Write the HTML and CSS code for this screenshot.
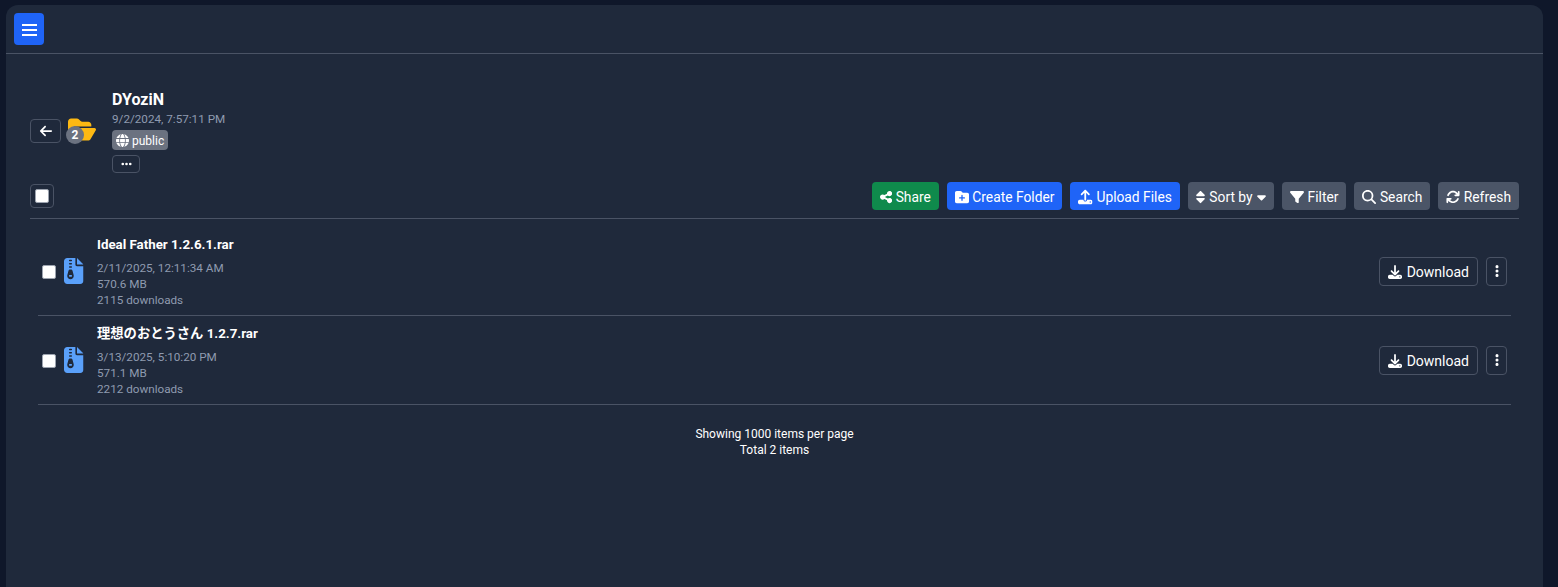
FILE: index.html
```html
<!DOCTYPE html>
<html lang="en">
<head>
  <meta charset="UTF-8">
  <meta name="viewport" content="width=device-width, initial-scale=1.0">
  <title>DYoziN</title>
  <link rel="stylesheet" href="styles.css">
</head>
<body>
  <svg class="defs" aria-hidden="true">
    <symbol id="i-bars" viewBox="0 0 15 12"><path d="M0 0h15v2H0zM0 5h15v2H0zM0 10h15v2H0z"/></symbol>
    <symbol id="i-arrow" viewBox="0 0 448 512"><path d="M9.400 233.400c-12.500 12.500-12.500 32.800 0 45.300l160 160c12.500 12.500 32.800 12.500 45.300 0s12.500-32.800 0-45.300L109.300 288 416 288c17.700 0 32-14.300 32-32s-14.300-32-32-32l-306.700 0L214.600 118.600c12.500-12.500 12.500-32.800 0-45.300s-32.800-12.500-45.300 0l-160 160z"/></symbol>
    <symbol id="i-folder-open" viewBox="0 0 576 512"><path d="M88.700 223.800L0 375.800V96C0 60.700 28.700 32 64 32H181.500c17 0 33.300 6.700 45.300 18.700l26.500 26.500c12 12 28.300 18.700 45.300 18.700H416c35.300 0 64 28.700 64 64v32H144c-22.800 0-43.800 12.100-55.300 31.800zm27.600 16.100C122.100 230 132.600 224 144 224H544c11.500 0 22 6.100 27.700 16.100s5.700 22.200-.1 32.100l-112 192C453.900 474 443.400 480 432 480H32c-11.500 0-22-6.100-27.700-16.100s-5.700-22.200 .1-32.100l112-192z"/></symbol>
    <symbol id="i-globe" viewBox="0 0 512 512"><path d="M352 256c0 22.200-1.200 43.600-3.300 64H163.300c-2.200-20.400-3.300-41.800-3.300-64s1.200-43.600 3.300-64H348.700c2.200 20.400 3.300 41.800 3.300 64zm28.800-64H503.900c5.300 20.500 8.100 41.900 8.100 64s-2.800 43.500-8.100 64H380.800c2.100-20.600 3.200-42 3.200-64s-1.100-43.400-3.200-64zm112.600-32H376.700c-10-63.900-29.800-117.400-55.300-151.600c78.300 20.700 142 77.500 171.900 151.600zm-149.100 0H167.700c6.100-36.400 15.500-68.600 27-94.700c10.500-23.600 22.200-40.700 33.500-51.500C239.400 3.200 248.700 0 256 0s16.600 3.200 27.800 13.800c11.300 10.800 23 27.900 33.500 51.500c11.600 26 20.900 58.200 27 94.700zm-209 0H18.600C48.600 85.900 112.200 29.100 190.600 8.400C165.100 42.600 145.300 96.100 135.300 160zM8.100 192H131.200c-2.100 20.600-3.200 42-3.200 64s1.100 43.400 3.200 64H8.100C2.800 299.500 0 278.100 0 256s2.800-43.500 8.100-64zM194.700 446.600c-11.600-26-20.900-58.200-27-94.600H344.300c-6.100 36.400-15.500 68.600-27 94.600c-10.500 23.600-22.200 40.700-33.500 51.500C272.600 508.800 263.300 512 256 512s-16.600-3.200-27.800-13.800c-11.300-10.800-23-27.900-33.500-51.500zM135.300 352c10 63.900 29.800 117.400 55.300 151.600C112.200 482.900 48.600 426.100 18.600 352H135.300zm358.100 0c-30 74.100-93.600 130.900-171.900 151.600c25.500-34.200 45.200-87.700 55.300-151.600H493.400z"/></symbol>
    <symbol id="i-dots-h" viewBox="0 0 448 512"><path d="M8 256a56 56 0 1 1 112 0A56 56 0 1 1 8 256zm160 0a56 56 0 1 1 112 0 56 56 0 1 1-112 0zm216-56a56 56 0 1 1 0 112 56 56 0 1 1 0-112z"/></symbol>
    <symbol id="i-dots-v" viewBox="0 0 128 512"><path d="M64 360a56 56 0 1 0 0 112 56 56 0 1 0 0-112zm0-160a56 56 0 1 0 0 112 56 56 0 1 0 0-112zM120 96A56 56 0 1 0 8 96a56 56 0 1 0 112 0z"/></symbol>
    <symbol id="i-share" viewBox="0 0 448 512"><path d="M352 224c53 0 96-43 96-96s-43-96-96-96s-96 43-96 96c0 4 .2 8 .7 11.900l-94.100 47C145.400 170.200 121.900 160 96 160c-53 0-96 43-96 96s43 96 96 96c25.900 0 49.400-10.200 66.600-26.900l94.100 47c-.5 3.900-.7 7.800-.7 11.900c0 53 43 96 96 96s96-43 96-96s-43-96-96-96c-25.900 0-49.400 10.200-66.600 26.900l-94.100-47c.5-3.900 .7-7.800 .7-11.900s-.2-8-.7-11.900l94.100-47C302.600 213.800 326.100 224 352 224z"/></symbol>
    <symbol id="i-folder-plus" viewBox="0 0 512 512"><path d="M512 416c0 35.300-28.700 64-64 64H64c-35.300 0-64-28.700-64-64V96C0 60.700 28.700 32 64 32H192c20.100 0 39.100 9.500 51.200 25.600l19.200 25.600c6 8.100 15.500 12.800 25.600 12.800H448c35.300 0 64 28.700 64 64V416zM232 376c0 13.300 10.700 24 24 24s24-10.700 24-24V312h64c13.300 0 24-10.700 24-24s-10.700-24-24-24H280V200c0-13.300-10.700-24-24-24s-24 10.700-24 24v64H168c-13.300 0-24 10.700-24 24s10.700 24 24 24h64v64z"/></symbol>
    <symbol id="i-upload" viewBox="0 0 512 512"><path d="M288 109.300V352c0 17.700-14.300 32-32 32s-32-14.300-32-32V109.300l-73.400 73.400c-12.500 12.500-32.800 12.500-45.300 0s-12.500-32.800 0-45.300l128-128c12.500-12.500 32.800-12.500 45.300 0l128 128c12.500 12.500 12.500 32.800 0 45.300s-32.800 12.500-45.300 0L288 109.300zM64 352H192c0 35.300 28.700 64 64 64s64-28.700 64-64H448c35.300 0 64 28.700 64 64v32c0 35.300-28.700 64-64 64H64c-35.300 0-64-28.700-64-64V416c0-35.300 28.700-64 64-64zM432 456a24 24 0 1 0 0-48 24 24 0 1 0 0 48z"/></symbol>
    <symbol id="i-sort" viewBox="0 0 320 512"><path d="M137.400 41.400c12.500-12.500 32.800-12.500 45.300 0l128 128c9.200 9.200 11.900 22.900 6.900 34.900s-16.600 19.800-29.600 19.800H32c-12.900 0-24.600-7.800-29.600-19.800s-2.200-25.700 6.900-34.900l128-128zm0 429.300l-128-128c-9.200-9.200-11.900-22.900-6.900-34.900s16.600-19.800 29.600-19.800H288c12.900 0 24.600 7.800 29.600 19.800s2.200 25.700-6.900 34.900l-128 128c-12.500 12.500-32.800 12.500-45.300 0z"/></symbol>
    <symbol id="i-caret" viewBox="0 0 320 512"><path d="M137.400 374.600c12.500 12.500 32.800 12.500 45.300 0l128-128c9.200-9.200 11.900-22.900 6.900-34.900s-16.600-19.800-29.600-19.800L32 192c-12.900 0-24.600 7.800-29.600 19.800s-2.200 25.700 6.900 34.900l128 128z"/></symbol>
    <symbol id="i-filter" viewBox="0 0 512 512"><path d="M3.900 54.900C10.500 40.900 24.500 32 40 32H472c15.500 0 29.500 8.900 36.100 22.900s4.600 30.500-5.200 42.500L320 320.900V448c0 12.100-6.800 23.200-17.700 28.600s-23.800 4.300-33.500-3l-64-48c-8.100-6-12.800-15.500-12.800-25.600V320.900L9 97.300C-.7 85.400-2.800 68.800 3.900 54.900z"/></symbol>
    <symbol id="i-search" viewBox="0 0 512 512"><path d="M416 208c0 45.900-14.900 88.300-40 122.700L502.600 457.400c12.500 12.500 12.500 32.800 0 45.300s-32.800 12.500-45.300 0L330.700 376c-34.400 25.200-76.800 40-122.700 40C93.100 416 0 322.900 0 208S93.100 0 208 0S416 93.100 416 208zM208 352a144 144 0 1 0 0-288 144 144 0 1 0 0 288z"/></symbol>
    <symbol id="i-sync" viewBox="0 0 512 512"><path d="M105.100 202.600c7.700-21.800 20.200-42.300 37.800-59.800c62.500-62.500 163.800-62.500 226.300 0L386.300 160H336c-17.700 0-32 14.300-32 32s14.300 32 32 32H463.500c0 0 0 0 0 0h.4c17.700 0 32-14.300 32-32V64c0-17.700-14.300-32-32-32s-32 14.300-32 32v51.200L414.400 97.600c-87.500-87.500-229.300-87.500-316.800 0C73.200 122 55.600 150.700 44.800 181.400c-5.900 16.700 2.900 34.900 19.500 40.800s34.900-2.900 40.800-19.500zM39 289.300c-5 1.500-9.800 4.200-13.700 8.200c-4 4-6.700 8.800-8.100 14c-.3 1.200-.6 2.500-.8 3.800c-.3 1.700-.4 3.400-.4 5.100V448c0 17.700 14.300 32 32 32s32-14.300 32-32V396.900l17.600 17.500 0 0c87.500 87.400 229.300 87.400 316.700 0c24.400-24.400 42.100-53.100 52.900-83.700c5.900-16.700-2.900-34.900-19.500-40.800s-34.900 2.900-40.800 19.500c-7.700 21.800-20.200 42.300-37.800 59.800c-62.500 62.500-163.800 62.500-226.300 0l-.1-.1L125.600 352H176c17.700 0 32-14.300 32-32s-14.300-32-32-32H48.400c-1.600 0-3.200 .1-4.800 .3s-3.100 .5-4.600 1z"/></symbol>
    <symbol id="i-download" viewBox="0 0 512 512"><path d="M288 32c0-17.700-14.300-32-32-32s-32 14.300-32 32V274.700l-73.400-73.400c-12.500-12.500-32.800-12.500-45.300 0s-12.500 32.800 0 45.300l128 128c12.500 12.500 32.800 12.500 45.300 0l128-128c12.500-12.500 12.500-32.800 0-45.300s-32.800-12.500-45.300 0L288 274.700V32zM64 352c-35.300 0-64 28.700-64 64v32c0 35.300 28.700 64 64 64H448c35.300 0 64-28.700 64-64V416c0-35.300-28.700-64-64-64H346.500l-45.300 45.300c-25 25-65.500 25-90.500 0L165.500 352H64zm368 56a24 24 0 1 1 0 48 24 24 0 1 1 0-48z"/></symbol>
    <symbol id="i-archive" viewBox="0 0 384 512"><path d="M64 0C28.700 0 0 28.700 0 64V448c0 35.300 28.700 64 64 64H320c35.300 0 64-28.700 64-64V160H256c-17.700 0-32-14.300-32-32V0H64zM256 0V128H384L256 0zM96 48c0-8.800 7.200-16 16-16h32c8.800 0 16 7.200 16 16s-7.200 16-16 16H112c-8.800 0-16-7.200-16-16zm0 64c0-8.800 7.200-16 16-16h32c8.800 0 16 7.200 16 16s-7.200 16-16 16H112c-8.800 0-16-7.200-16-16zm0 64c0-8.800 7.200-16 16-16h32c8.800 0 16 7.200 16 16s-7.200 16-16 16H112c-8.800 0-16-7.200-16-16zm-6.300 71.800c3.700-14 16.400-23.800 30.900-23.800h14.800c14.500 0 27.200 9.700 30.900 23.800l23.500 88.200c1.400 5.400 2.100 10.900 2.100 16.400c0 35.200-28.800 63.700-64 63.700s-64-28.500-64-63.700c0-5.500 .7-11.100 2.100-16.400l23.500-88.200zM112 336c-8.800 0-16 7.200-16 16s7.200 16 16 16h32c8.800 0 16-7.200 16-16s-7.200-16-16-16H112z"/></symbol>
  </svg>

  <div class="panel">
    <header class="topbar">
      <button class="menu-btn"><svg class="ico-menu"><use href="#i-bars"/></svg></button>
    </header>

    <main class="content">
      <section class="folder-head">
        <button class="btn btn-outline back-btn"><svg class="ico"><use href="#i-arrow"/></svg></button>
        <div class="folder-icon">
          <svg class="ico-folder"><use href="#i-folder-open"/></svg>
          <span class="count-badge">2</span>
        </div>
        <div class="folder-info">
          <h1 class="folder-name">DYoziN</h1>
          <div class="meta">9/2/2024, 7:57:11 PM</div>
          <span class="tag"><svg class="ico-tag"><use href="#i-globe"/></svg>public</span>
          <button class="btn btn-outline more-btn"><svg class="ico-more"><use href="#i-dots-h"/></svg></button>
        </div>
      </section>

      <section class="toolbar">
        <label class="select-all"><input type="checkbox"></label>
        <div class="actions">
          <button class="btn btn-green"><svg class="ico-share"><use href="#i-share"/></svg>Share</button>
          <button class="btn btn-blue"><svg class="ico"><use href="#i-folder-plus"/></svg>Create Folder</button>
          <button class="btn btn-blue"><svg class="ico-upload"><use href="#i-upload"/></svg>Upload Files</button>
          <button class="btn btn-grey"><svg class="ico-sort"><use href="#i-sort"/></svg>Sort by<svg class="ico-caret"><use href="#i-caret"/></svg></button>
          <button class="btn btn-grey"><svg class="ico"><use href="#i-filter"/></svg>Filter</button>
          <button class="btn btn-grey"><svg class="ico"><use href="#i-search"/></svg>Search</button>
          <button class="btn btn-grey"><svg class="ico"><use href="#i-sync"/></svg>Refresh</button>
        </div>
      </section>

      <ul class="file-list">
        <li class="file-row">
          <input type="checkbox" class="file-check">
          <svg class="ico-file"><use href="#i-archive"/></svg>
          <div class="file-info">
            <div class="file-name">Ideal Father 1.2.6.1.rar</div>
            <div class="meta">2/11/2025, 12:11:34 AM</div>
            <div class="meta">570.6 MB</div>
            <div class="meta">2115 downloads</div>
          </div>
          <button class="btn btn-outline dl-btn"><svg class="ico"><use href="#i-download"/></svg>Download</button>
          <button class="btn btn-outline kebab-btn"><svg class="ico-kebab"><use href="#i-dots-v"/></svg></button>
        </li>
        <li class="file-row">
          <input type="checkbox" class="file-check">
          <svg class="ico-file"><use href="#i-archive"/></svg>
          <div class="file-info">
            <div class="file-name">理想のおとうさん 1.2.7.rar</div>
            <div class="meta">3/13/2025, 5:10:20 PM</div>
            <div class="meta">571.1 MB</div>
            <div class="meta">2212 downloads</div>
          </div>
          <button class="btn btn-outline dl-btn"><svg class="ico"><use href="#i-download"/></svg>Download</button>
          <button class="btn btn-outline kebab-btn"><svg class="ico-kebab"><use href="#i-dots-v"/></svg></button>
        </li>
      </ul>

      <footer class="list-footer">
        <div>Showing 1000 items per page</div>
        <div>Total 2 items</div>
      </footer>
    </main>
  </div>
</body>
</html>
```

FILE: styles.css
```css
:root {
  --page-bg: #0f172a;
  --panel-bg: #1f293b;
  --line: #4a5365;
  --muted: #8f9bb0;
  --blue: #1f64f7;
  --green: #0f8a4c;
  --grey: #4b5567;
}

* {
  box-sizing: border-box;
  margin: 0;
  padding: 0;
}

body {
  font-family: Roboto, "Noto Sans CJK JP", sans-serif;
  background-color: var(--page-bg);
  color: #fff;
  font-size: 14px;
  height: 100vh;
  overflow: hidden;
  padding: 5px 15px 0 6px;
}

.defs {
  display: none;
}

svg {
  fill: currentColor;
  flex-shrink: 0;
}

.panel {
  background-color: var(--panel-bg);
  border-radius: 12px 12px 0 0;
  height: 100%;
}

.topbar {
  height: 49px;
  padding: 8px;
  border-bottom: 1px solid var(--line);
}

.menu-btn {
  display: flex;
  align-items: center;
  justify-content: center;
  width: 30px;
  height: 32px;
  padding-top: 2px;
  border: none;
  border-radius: 4px;
  background-color: var(--blue);
  color: #fff;
}

.ico-menu {
  width: 15px;
  height: 12px;
}

.content {
  padding: 35px 24px 0;
}

.btn {
  display: inline-flex;
  align-items: center;
  justify-content: center;
  gap: 3.5px;
  height: 28px;
  padding: 1px 7px 0;
  border: 1px solid transparent;
  border-radius: 4px;
  color: #fff;
  font-family: inherit;
  font-size: 13.8px;
  white-space: nowrap;
}

.btn-outline {
  background: none;
  border-color: var(--line);
}

.btn-green {
  background-color: var(--green);
}

.btn-blue {
  background-color: var(--blue);
}

.btn-grey {
  background-color: var(--grey);
}

.ico {
  width: 14px;
  height: 14px;
}

.ico-share {
  width: 12.25px;
  height: 14px;
}

.ico-upload {
  width: 14.5px;
  height: 16px;
}

.folder-head {
  display: flex;
  align-items: center;
  height: 84px;
}

.back-btn {
  width: 31px;
  height: 24px;
  padding: 0;
}

.folder-icon {
  position: relative;
  width: 28px;
  height: 25px;
  margin: -4px 16px 0 7px;
}

.ico-folder {
  display: block;
  width: 28px;
  height: 25px;
  color: #fdb913;
}

.count-badge {
  position: absolute;
  left: -2px;
  top: 9px;
  width: 18px;
  height: 18px;
  border-radius: 50%;
  background-color: #6b7280;
  font-size: 12px;
  font-weight: 700;
  line-height: 18px;
  text-align: center;
}

.folder-info {
  display: flex;
  flex-direction: column;
  align-items: flex-start;
}

.folder-name {
  font-size: 16px;
  font-weight: 700;
  line-height: 19px;
  margin-bottom: 3px;
  padding-top: 1px;
  height: 19px;
}

.meta {
  color: var(--muted);
  font-size: 11.7px;
  line-height: 16px;
}

.tag {
  display: inline-flex;
  align-items: center;
  gap: 3px;
  height: 20px;
  margin-top: 3px;
  padding: 1px 4px 0;
  border-radius: 4px;
  background-color: #6b7280;
  font-size: 12px;
}

.ico-tag {
  width: 13px;
  height: 13px;
}

.more-btn {
  width: 28px;
  height: 18px;
  margin-top: 5px;
  padding: 0;
}

.ico-more {
  width: 11px;
  height: 12px;
}

.toolbar {
  display: flex;
  align-items: center;
  justify-content: space-between;
  margin-top: 9px;
  padding-bottom: 8px;
  border-bottom: 1px solid var(--line);
}

.select-all {
  display: flex;
  align-items: center;
  justify-content: center;
  width: 24px;
  height: 24px;
  border: 1px solid var(--line);
  border-radius: 4px;
}

input[type="checkbox"] {
  appearance: none;
  width: 14px;
  height: 14px;
  border-radius: 2px;
  background-color: #fff;
  border: 1px solid #9ca3af;
}

.actions {
  display: flex;
  gap: 8px;
}

.ico-sort {
  width: 9px;
  height: 14px;
  margin-right: 1px;
}

.ico-caret {
  width: 9px;
  height: 14px;
  margin-left: 1px;
}

.file-list {
  list-style: none;
  margin: 8px 8px 0;
}

.file-row {
  display: flex;
  align-items: center;
  height: 89px;
  padding: 0 4px;
  border-bottom: 1px solid var(--line);
}

.file-check {
  margin: 2px 8px 0 0;
}

.ico-file {
  width: 19.5px;
  height: 26px;
  margin-right: 13.5px;
  color: #5aa0fa;
}

.file-info {
  flex: 1;
}

.file-name {
  font-size: 13.3px;
  font-weight: 700;
  line-height: 18px;
  margin-bottom: 6px;
  padding-top: 2px;
}

.dl-btn {
  height: 29px;
  margin-right: 8px;
  font-size: 14px;
  padding: 1px 8px 0;
  gap: 4.75px;
}

.kebab-btn {
  width: 21px;
  height: 29px;
  padding: 0;
}

.ico-kebab {
  width: 4px;
  height: 14px;
}

.list-footer {
  margin-top: 21px;
  text-align: center;
  font-size: 12px;
  line-height: 16px;
}
```
